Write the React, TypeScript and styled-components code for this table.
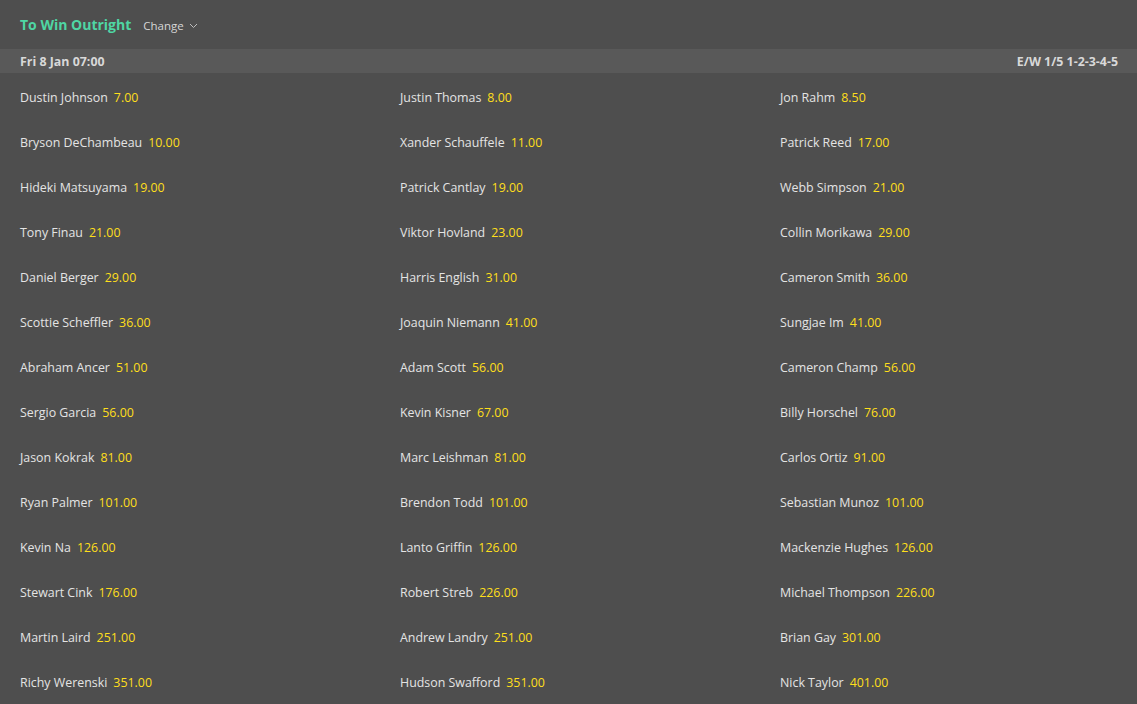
import styled, { createGlobalStyle } from 'styled-components';

const GlobalStyle = createGlobalStyle`
  html, body {
    margin: 0;
    padding: 0;
    background: #4e4e4e;
  }
  body {
    font-family: 'Open Sans', 'Liberation Sans', sans-serif;
    color: #e2e2e2;
  }
`;

const Market = styled.div`
  width: 1137px;
  height: 704px;
  overflow: hidden;
  background: #4e4e4e;
`;

const Header = styled.div`
  height: 49px;
  display: flex;
  align-items: center;
  padding: 0 20px;
  gap: 12px;
`;

const Title = styled.span`
  color: #4fd6a4;
  font-size: 14px;
  font-weight: 700;
`;

const Change = styled.span`
  display: flex;
  align-items: center;
  gap: 5px;
  font-size: 11.5px;
  color: #d6d6d6;
  padding-top: 2px;
`;

const Band = styled.div`
  height: 24px;
  display: flex;
  align-items: center;
  justify-content: space-between;
  padding: 0 19px 0 20px;
  background: #595959;
  font-size: 12.4px;
  font-weight: 700;
  color: #d8d8d8;
`;

const Grid = styled.div`
  display: grid;
  grid-template-columns: 380px 380px 1fr;
  padding: 2px 0 0 20px;
`;

const Cell = styled.div`
  height: 45px;
  display: flex;
  align-items: center;
  gap: 6px;
  font-size: 12.4px;
  white-space: nowrap;
`;

const Name = styled.span`
  color: #e4e4e4;
`;

const Odds = styled.span`
  color: #ffdf1b;
`;

const runners: [string, string][] = [
  ['Dustin Johnson', '7.00'], ['Justin Thomas', '8.00'], ['Jon Rahm', '8.50'],
  ['Bryson DeChambeau', '10.00'], ['Xander Schauffele', '11.00'], ['Patrick Reed', '17.00'],
  ['Hideki Matsuyama', '19.00'], ['Patrick Cantlay', '19.00'], ['Webb Simpson', '21.00'],
  ['Tony Finau', '21.00'], ['Viktor Hovland', '23.00'], ['Collin Morikawa', '29.00'],
  ['Daniel Berger', '29.00'], ['Harris English', '31.00'], ['Cameron Smith', '36.00'],
  ['Scottie Scheffler', '36.00'], ['Joaquin Niemann', '41.00'], ['Sungjae Im', '41.00'],
  ['Abraham Ancer', '51.00'], ['Adam Scott', '56.00'], ['Cameron Champ', '56.00'],
  ['Sergio Garcia', '56.00'], ['Kevin Kisner', '67.00'], ['Billy Horschel', '76.00'],
  ['Jason Kokrak', '81.00'], ['Marc Leishman', '81.00'], ['Carlos Ortiz', '91.00'],
  ['Ryan Palmer', '101.00'], ['Brendon Todd', '101.00'], ['Sebastian Munoz', '101.00'],
  ['Kevin Na', '126.00'], ['Lanto Griffin', '126.00'], ['Mackenzie Hughes', '126.00'],
  ['Stewart Cink', '176.00'], ['Robert Streb', '226.00'], ['Michael Thompson', '226.00'],
  ['Martin Laird', '251.00'], ['Andrew Landry', '251.00'], ['Brian Gay', '301.00'],
  ['Richy Werenski', '351.00'], ['Hudson Swafford', '351.00'], ['Nick Taylor', '401.00'],
];

const App = () => {
  return (
    <Market>
      <GlobalStyle />
      <Header>
        <Title>To Win Outright</Title>
        <Change>
          Change
          <svg width='9' height='6' viewBox='0 0 9 6'>
            <path d='M1 1l3.5 3.5L8 1' stroke='#bdbdbd' strokeWidth='1' fill='none' />
          </svg>
        </Change>
      </Header>
      <Band>
        <span>Fri 8 Jan 07:00</span>
        <span>E/W 1/5 1-2-3-4-5</span>
      </Band>
      <Grid>
        {runners.map(([name, odds]) => (
          <Cell key={name}>
            <Name>{name}</Name>
            <Odds>{odds}</Odds>
          </Cell>
        ))}
      </Grid>
    </Market>
  );
};

export default App;
